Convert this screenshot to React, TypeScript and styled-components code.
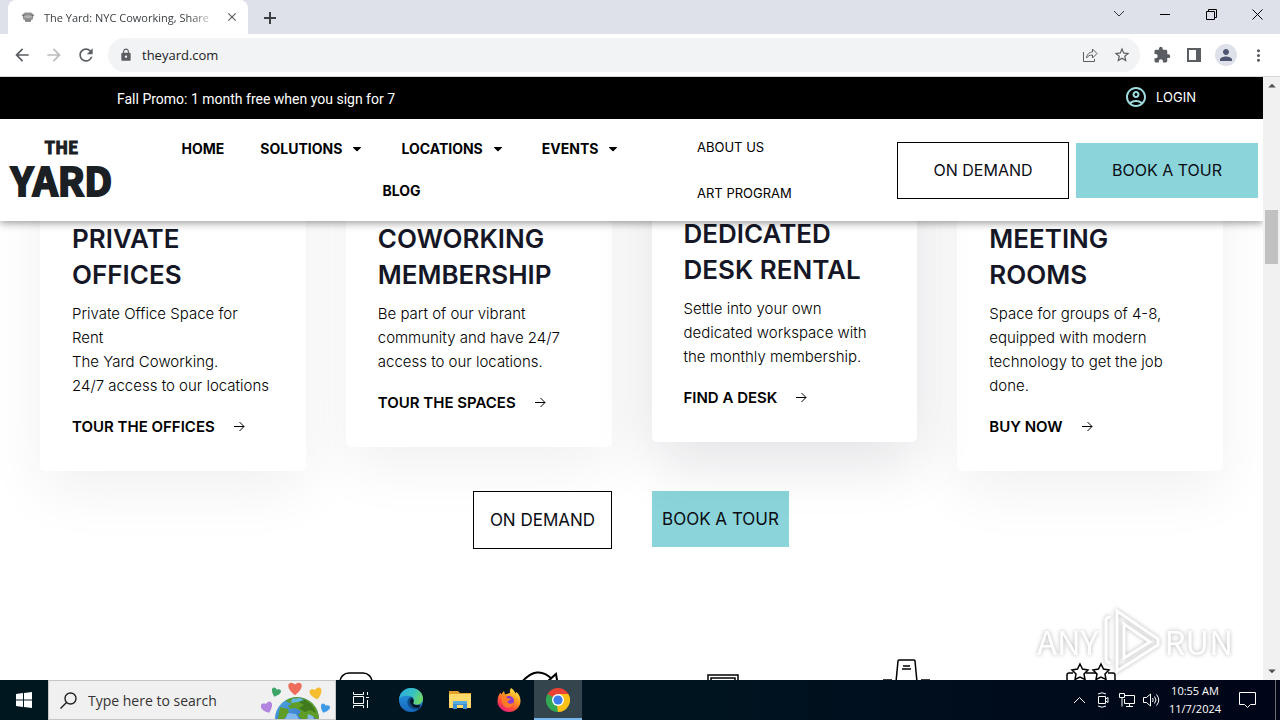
import React from "react";
import styled, { createGlobalStyle } from "styled-components";
import {
  MdArrowBack,
  MdArrowForward,
  MdRefresh,
  MdLock,
  MdStarBorder,
  MdExtension,
  MdMoreVert,
  MdPerson,
  MdClose,
  MdArrowDropUp,
  MdArrowDropDown,
  MdOutlineAccountCircle,
} from "react-icons/md";

const GlobalStyle = createGlobalStyle`
  * { box-sizing: border-box; }
  body { margin: 0; background: #fff; }
  button, input { font: inherit; color: inherit; border: 0; padding: 0; background: none; outline: 0; }
  a { color: inherit; text-decoration: none; }
  svg { display: block; flex: none; }
`;

const site = `Inter, "Liberation Sans", sans-serif`;
const system = `"Open Sans", "Noto Sans", sans-serif`;
const narrow = `"Noto Sans CJK SC", "Liberation Sans", sans-serif`;
const aqua = "#8ad4da";

const Desktop = styled.div`
  display: flex;
  flex-direction: column;
  height: 100vh;
  overflow: hidden;
  font-family: ${system};
  font-size: 12px;
`;

/* ---------- browser chrome ---------- */

const TabStrip = styled.div`
  display: flex;
  align-items: flex-end;
  height: 34px;
  flex: none;
  padding-left: 8px;
  background: #dee1e9;
`;

const Tab = styled.div`
  display: flex;
  align-items: center;
  width: 240px;
  height: 34px;
  padding: 0 9px 0 13px;
  gap: 9px;
  background: #fff;
  border-radius: 8px 8px 0 0;
  color: #3c4043;
`;

const TabTitle = styled.span`
  flex: 1;
  font-size: 11px;
  white-space: nowrap;
  mask-image: linear-gradient(90deg, #000 85%, transparent);
`;

const IconButton = styled.button<{ $w?: number; $color?: string }>`
  display: flex;
  align-items: center;
  justify-content: center;
  width: ${(p) => p.$w ?? 32}px;
  height: 32px;
  color: ${(p) => p.$color ?? "#5a5e63"};
`;

const TabClose = styled(IconButton)`
  width: 14px;
`;

const WindowButtons = styled.div`
  display: flex;
  align-items: center;
  align-self: flex-start;
  margin-left: auto;
  height: 28px;
`;

const Toolbar = styled.div`
  display: flex;
  align-items: center;
  height: 43px;
  flex: none;
  padding: 0 6px;
  background: #fff;
  border-bottom: 1px solid #d5d7da;
`;

const AddressBar = styled.label`
  display: flex;
  align-items: center;
  flex: 1;
  height: 34px;
  margin: 0 6px;
  padding: 0 2px 0 11px;
  border-radius: 17px;
  background: #f1f3f4;
  color: #5a5e63;
`;

const AddressInput = styled.input`
  flex: 1;
  min-width: 0;
  padding-left: 9px;
  font-size: 13px;
  color: #202124;
`;

const Avatar = styled.span`
  display: flex;
  align-items: center;
  justify-content: center;
  width: 22px;
  height: 22px;
  border-radius: 50%;
  background: #dee1e9;
  color: #4f5470;
`;

/* ---------- page ---------- */

const Viewport = styled.div`
  display: flex;
  flex: 1;
  min-height: 0;
`;

const Page = styled.div`
  position: relative;
  flex: 1;
  min-width: 0;
  overflow: hidden;
  background: #fff;
  font-family: ${site};
  color: #000;
`;

const Scrollbar = styled.div`
  display: flex;
  flex-direction: column;
  align-items: center;
  width: 17px;
  background: #f1f1f1;
  color: #505050;
`;

const Track = styled.div`
  flex: 1;
  width: 13px;
  padding-top: 115px;
`;

const Thumb = styled.div`
  height: 54px;
  background: #c1c1c1;
`;

const PromoBar = styled.div`
  position: relative;
  z-index: 2;
  display: flex;
  align-items: center;
  justify-content: space-between;
  height: 42px;
  padding: 0 67px 2px 117px;
  background: #000;
  color: #fff;
  font-size: 14px;
`;

const PromoText = styled.p`
  margin: 0;
  padding-top: 4px;
  font-family: Roboto, sans-serif;
`;

const Login = styled.a`
  display: flex;
  align-items: center;
  gap: 8px;
  font-size: 13px;
`;

const Header = styled.header`
  position: relative;
  z-index: 1;
  display: flex;
  align-items: center;
  height: 102px;
  padding: 0 5px 0 11px;
  background: #fff;
  box-shadow: 0 2px 8px rgba(0, 0, 0, 0.4);
`;

const Logo = styled.a`
  display: flex;
  flex-direction: column;
  align-items: center;
  width: 101px;
  font-family: ${narrow};
  font-weight: 700;
  color: #1a2023;
`;

const LogoTop = styled.span`
  font-size: 17px;
  line-height: 18px;
  -webkit-text-stroke: 1px #1a2023;
`;

const LogoMain = styled.span`
  font-size: 39px;
  line-height: 46px;
  -webkit-text-stroke: 2px #1a2023;
`;

const Nav = styled.nav`
  display: flex;
  flex: 1;
  flex-wrap: wrap;
  justify-content: center;
  padding: 0 56px 2px 50px;
`;

const NavLink = styled.a`
  display: flex;
  align-items: center;
  height: 42px;
  padding: 0 18px;
  gap: 7px;
  font-size: 14px;
  font-weight: 700;
`;

const SideNav = styled.nav`
  display: flex;
  flex-direction: column;
  width: 200px;
  font-size: 13px;
  line-height: 46px;
`;

const Cta = styled.button<{ $solid?: boolean; $compact?: boolean }>`
  height: ${(p) => (p.$compact ? 58 : 57) - (p.$solid ? 2 : 0)}px;
  min-width: ${(p) => (p.$compact ? (p.$solid ? 137 : 139) : p.$solid ? 182 : 172)}px;
  font-size: ${(p) => (p.$compact ? 17 : 16)}px;
  font-weight: 400;
  white-space: nowrap;
  background: ${(p) => (p.$solid ? aqua : "#fff")};
  border: ${(p) => (p.$solid ? "0" : "1px solid #000")};
  color: #0a0d14;
`;

const HeaderActions = styled.div`
  display: flex;
  align-items: center;
  gap: 7px;
`;

const CardGrid = styled.section`
  display: grid;
  grid-template-columns: repeat(4, 1fr);
  align-items: start;
  gap: 40px;
  margin-top: -120px;
  padding: 0 40px;
`;

const Card = styled.article<{ $raised?: boolean }>`
  padding: 120px 32px 31px;
  background: #fff;
  border-radius: 5px;
  box-shadow: 0 20px 60px ${(p) => (p.$raised ? "rgba(20, 20, 43, 0.12)" : "rgba(0, 0, 0, 0.06)")};
  transform: ${(p) => (p.$raised ? "translateY(-5px)" : "none")};
`;

const CardTitle = styled.h2`
  margin: 0 0 9px;
  font-size: 26px;
  line-height: 36px;
  font-weight: 600;
  color: #151726;
  white-space: pre-line;
`;

const CardText = styled.p`
  margin: 0 0 16px;
  font-size: 15px;
  line-height: 24px;
  font-weight: 300;
  white-space: pre-line;
`;

const CardLink = styled.a`
  display: flex;
  align-items: center;
  gap: 18px;
  font-size: 15px;
  line-height: 26px;
  font-weight: 600;
`;

const CtaRow = styled.div`
  display: flex;
  justify-content: center;
  align-items: flex-start;
  gap: 40px;
  padding: 20px 1px 0 0;
`;

const Features = styled.section`
  display: grid;
  grid-template-columns: repeat(6, 1fr);
  justify-items: center;
  align-items: start;
  padding: 107px 80px 0;
`;

const Watermark = styled.div`
  position: absolute;
  right: 30px;
  bottom: 6px;
  display: flex;
  align-items: center;
  gap: 3px;
  color: #fff;
  font-family: ${narrow};
  font-size: 33px;
  line-height: 40px;
  filter: drop-shadow(0 0 2px rgba(0, 0, 0, 0.3));
`;

/* ---------- taskbar ---------- */

const Taskbar = styled.div`
  display: flex;
  align-items: stretch;
  height: 40px;
  flex: none;
  background: linear-gradient(90deg, #00171f, #001420 55%, #000518);
  color: #fff;
`;

const TaskButton = styled.button<{ $active?: boolean; $w?: number }>`
  display: flex;
  align-items: center;
  justify-content: center;
  width: ${(p) => p.$w ?? 48}px;
  background: ${(p) => (p.$active ? "#34454e" : "none")};
  box-shadow: ${(p) => (p.$active ? "inset 0 -2px #76b9ed" : "none")};
`;

const TaskButtons = styled.div`
  display: flex;
  gap: 1px;
`;

const Search = styled.label`
  display: flex;
  align-items: center;
  width: 288px;
  padding: 0 4px 0 11px;
  gap: 11px;
  background: #f0f0f0;
  border: 1px solid #c4c7c9;
`;

const SearchInput = styled.input`
  flex: 1;
  min-width: 0;
  font-size: 14px;
  &::placeholder {
    color: #333;
    opacity: 1;
  }
`;

const Tray = styled.div`
  display: flex;
  align-items: center;
  margin-left: auto;
`;

const TrayButton = styled.button`
  display: flex;
  align-items: center;
  justify-content: center;
  width: 24px;
  height: 40px;
`;

const Clock = styled.div`
  width: 64px;
  font-size: 11px;
  line-height: 18px;
  text-align: center;
`;

const Notifications = styled(TrayButton)`
  width: 40px;
  margin-right: 8px;
`;

const PeekEdge = styled.div`
  width: 5px;
  height: 40px;
  border-left: 1px solid #6b7078;
`;

/* ---------- drawings ---------- */

const Line = ({
  w = 16,
  h = 16,
  sw = 1,
  box,
  children,
}: {
  w?: number;
  h?: number;
  sw?: number;
  box?: string;
  children: React.ReactNode;
}) => (
  <svg width={w} height={h} viewBox={box ?? `0 0 ${w} ${h}`} fill="none" stroke="currentColor" strokeWidth={sw} aria-hidden>
    {children}
  </svg>
);

const Caret = () => (
  <svg width="16" height="8" viewBox="0 0 16 8" aria-hidden>
    <path d="M4.500 3h7q1 0 .4.800L8.600 7q-.6.600-1.200 0L4.100 3.800Q3.500 3 4.500 3z" fill="#000" />
  </svg>
);

const Favicon = () => (
  <svg width="14" height="14" viewBox="0 0 14 14" aria-hidden>
    <path d="M1 5.500h12M4 11h6" stroke="#777" strokeWidth="1.500" />
    <path d="M2 4l2-1.500h6L12 4v5l-3 2H5L2 9z" fill="#777" opacity=".8" />
    <path d="M4 5.500v2M6 5v3M8 5v3M10 5.500v2" stroke="#eee" strokeWidth=".8" />
  </svg>
);

const Earth = () => (
  <svg width="70" height="38" viewBox="0 0 70 38" aria-hidden>
    <defs>
      <clipPath id="globe"><circle cx="36" cy="38" r="22" /></clipPath>
      <linearGradient id="sea" x1="0" y1="0" x2="1" y2="1">
        <stop offset="0" stopColor="#4faee0" /><stop offset="1" stopColor="#3465c4" />
      </linearGradient>
      <path id="heart" d="M0 5C-8-1-4-6 0-2.500C4-6 8-1 0 5z" />
    </defs>
    <g clipPath="url(#globe)">
      <rect x="12" y="14" width="50" height="28" fill="url(#sea)" />
      <path d="M24 20q6-5 14-4 12 1 18 12l3 12-9-5-7 5-6-5 3-5-6-3-5 1-2-3 4-2-4-2z" fill="#5f9d28" />
      <path d="M40 17q12 4 15 15l-6-3-5 2-6-4 5-3-5-3z" fill="#3f7a1e" />
      <path d="M31 18l8-1 4 2-6 2-7 1z" fill="#63b7e8" />
      <path d="M19 26l8 2 1 4-5 6h-6z" fill="#5f9d28" />
      <path d="M27 32l8 1 3 5H24zM47 33l5 2 2 5h-8z" fill="#7fb8ef" />
    </g>
    <use href="#heart" transform="translate(34 7) scale(1.450)" fill="#ee6d5a" />
    <use href="#heart" transform="translate(15 11) rotate(20) scale(1)" fill="#3aa567" />
    <use href="#heart" transform="translate(55 12) rotate(-15) scale(1.300)" fill="#f6bd2f" />
    <use href="#heart" transform="translate(6 26) rotate(-20) scale(1.250)" fill="#b184e0" />
    <use href="#heart" transform="translate(64 27) rotate(20) scale(1)" fill="#3d9ae8" />
  </svg>
);

const Edge = () => (
  <svg width="26" height="26" viewBox="0 0 26 26" aria-hidden>
    <defs>
      <linearGradient id="edgeTop" x1="0" y1="0" x2="1" y2=".4">
        <stop offset="0" stopColor="#2fa8e0" /><stop offset=".6" stopColor="#35c1c4" /><stop offset="1" stopColor="#6bd66b" />
      </linearGradient>
      <linearGradient id="edgeLow" x1="0" y1="0" x2="0" y2="1">
        <stop offset="0" stopColor="#2b9be0" /><stop offset="1" stopColor="#1668bd" />
      </linearGradient>
    </defs>
    <circle cx="13" cy="13" r="12" fill="url(#edgeLow)" />
    <path d="M1.200 12C2 5 7 1 13 1c7 0 12 5 12 10.500 0 4-3 6-6.500 6-2.500 0-4-.8-3.500-2 1.500-1.500 1-5.500-3-6.500C7 8 2.500 9 1.200 12z" fill="url(#edgeTop)" />
    <path d="M14 10c-3 0-5 2.500-4.500 6 .5 4 4 6.500 8 6.500 2 0 4-.5 5.500-2.500-3 1.500-7.500.5-8.500-2.500-.5-1.500 1-2.500 1-4.500 0-1.300-.5-2.500-1.500-3z" fill="#0d4a86" />
    <path d="M13.500 11.500q2.800.5 2 3.500-.8 1.500 1 2.700 3 .8 6-.2l-1 3q-4 1-6.500-.8-2.500-2.200-3-5.200.5-2.400 1.500-3z" fill="#00141f" />
  </svg>
);

const Folder = () => (
  <svg width="24" height="22" viewBox="0 0 24 22" aria-hidden>
    <path d="M1 2h9l2 2h11v4H1z" fill="#e0a02c" />
    <path d="M1 5h22v14H1z" fill="#ffd96a" />
    <path d="M5 12h14v8h-4v-4H9v4H5z" fill="#3c8fd0" />
    <path d="M5 12h14v3H5z" fill="#55aae0" />
  </svg>
);

const Firefox = () => (
  <svg width="26" height="26" viewBox="0 0 26 26" aria-hidden>
    <defs>
      <linearGradient id="fox" x1=".8" y1="0" x2=".2" y2="1">
        <stop offset="0" stopColor="#fff04a" /><stop offset=".4" stopColor="#ff9a20" /><stop offset=".7" stopColor="#ff4a3c" /><stop offset="1" stopColor="#e31587" />
      </linearGradient>
    </defs>
    <path d="M15 1c2.500 1.500 4 4 4.500 5.500l1-1.500c3 2.500 4 6 4 9 0 6-5 11-11.500 11S1.500 20 1.500 14c0-3.500 1.300-6.500 3-8.500l.5 2L8 4l1 3.500c2-1 4.500-1 5-1.500C13.500 4 14 2.500 15 1z" fill="url(#fox)" />
    <circle cx="13" cy="14" r="5" fill="#8a3bd0" />
    <path d="M6 10c2.500-1.500 5 0 6 1.500h3c-.5 2-3.500 2-3.500 3.500 1.500 2.500 4 2 6 .5-.5 3.500-3 5-5.500 5-4 0-7-4-6-10.500z" fill="#ff7d26" />
  </svg>
);

const Chrome = () => (
  <svg width="24" height="24" viewBox="0 0 24 24" aria-hidden>
    <path d="M12 12L1.600 6A12 12 0 0 1 22.400 6z" fill="#ea4335" />
    <path d="M12 12L22.400 6A12 12 0 0 1 12 24z" fill="#fbc116" />
    <path d="M12 12v12A12 12 0 0 1 1.600 6z" fill="#33a853" />
    <path d="M12 6h10.400L17.200 15z" fill="#fbc116" />
    <path d="M1.600 6L6.800 15 12 12 12 6z" fill="#33a853" />
    <path d="M1.600 6h20.800H12L6.800 9z" fill="#ea4335" />
    <path d="M17.200 15L12 24l-1-6z" fill="#fbc116" />
    <circle cx="12" cy="12" r="6" fill="#fff" />
    <circle cx="12" cy="12" r="4.600" fill="#3b7ded" />
  </svg>
);

const AnyRunMark = () => (
  <svg width="60" height="66" viewBox="0 0 60 66" fill="none" stroke="#fff" strokeWidth="3" aria-hidden>
    <path d="M16 3L57 31v6L16 63V3zM23 16v34l26-16zM5 50V12q0-3 5-3M5 50q0 5 5 5" />
  </svg>
);

const Arrow = () => (
  <Line w={12} h={12}>
    <path d="M1 5.500h10M6.500 1l4.500 4.500L6.500 10" />
  </Line>
);

/* ---------- content ---------- */

const cards = [
  { title: "PRIVATE\nOFFICES", text: "Private Office Space for\nRent\nThe Yard Coworking.\n24/7 access to our locations", link: "TOUR THE OFFICES" },
  { title: "COWORKING\nMEMBERSHIP", text: "Be part of our vibrant\ncommunity and have 24/7\naccess to our locations.", link: "TOUR THE SPACES" },
  { title: "DEDICATED\nDESK RENTAL", text: "Settle into your own\ndedicated workspace with\nthe monthly membership.", link: "FIND A DESK", raised: true },
  { title: "MEETING\nROOMS", text: "Space for groups of 4-8,\nequipped with modern\ntechnology to get the job\ndone.", link: "BUY NOW" },
];

const navItems = [
  { label: "HOME" },
  { label: "SOLUTIONS", menu: true },
  { label: "LOCATIONS", menu: true },
  { label: "EVENTS", menu: true },
  { label: "BLOG" },
];

const BrowserChrome = () => (
  <>
    <TabStrip>
      <Tab>
        <Favicon />
        <TabTitle>The Yard: NYC Coworking, Share</TabTitle>
        <TabClose aria-label="Close tab"><MdClose size={14} /></TabClose>
      </Tab>
      <IconButton $w={44} $color="#3c4043" aria-label="New tab">
        <Line w={12} h={12} sw={2}><path d="M0 6h12M6 0v12" /></Line>
      </IconButton>
      <WindowButtons>
        <IconButton $w={46} $color="#333" aria-label="Search tabs"><Line w={12} h={8}><path d="M1 1l5 5 5-5" /></Line></IconButton>
        <IconButton $w={46} $color="#000" aria-label="Minimize"><Line w={10} h={10}><path d="M0 5.500h10" /></Line></IconButton>
        <IconButton $w={46} $color="#000" aria-label="Restore"><Line w={11} h={11}><path d="M.5 2.500h8v8h-8zM2.500 2.500v-2h8v8h-2" /></Line></IconButton>
        <IconButton $w={46} $color="#000" aria-label="Close"><Line w={11} h={11}><path d="M.5.500l10 10M10.500.500l-10 10" /></Line></IconButton>
      </WindowButtons>
    </TabStrip>
    <Toolbar>
      <IconButton aria-label="Back"><MdArrowBack size={20} /></IconButton>
      <IconButton $color="#babcbe" aria-label="Forward"><MdArrowForward size={20} /></IconButton>
      <IconButton aria-label="Reload"><MdRefresh size={20} /></IconButton>
      <AddressBar>
        <MdLock size={14} />
        <AddressInput aria-label="Address" defaultValue="theyard.com" />
        <IconButton aria-label="Share">
          <Line w={16} h={16}><path d="M1.500 5v9.500h11V12M4.500 11c.5-4 3-6 6-6V2l4.500 4.500L10.500 11V8c-3 0-4.500 1-6 3z" /></Line>
        </IconButton>
        <IconButton aria-label="Bookmark"><MdStarBorder size={18} /></IconButton>
      </AddressBar>
      <IconButton aria-label="Extensions"><MdExtension size={18} /></IconButton>
      <IconButton aria-label="Side panel">
        <svg width="14" height="14" viewBox="0 0 14 14" aria-hidden><path d="M0 0h14v14H0zM2 2v10h7V2z" fill="currentColor" fillRule="evenodd" /></svg>
      </IconButton>
      <IconButton aria-label="Profile"><Avatar><MdPerson size={18} /></Avatar></IconButton>
      <IconButton aria-label="Menu"><MdMoreVert size={19} /></IconButton>
    </Toolbar>
  </>
);

const SiteHeader = () => (
  <>
    <PromoBar>
      <PromoText>Fall Promo: 1 month free when you sign for 7</PromoText>
      <Login href="#login"><MdOutlineAccountCircle size={24} color="#9fdce0" />LOGIN</Login>
    </PromoBar>
    <Header>
      <Logo href="#home">
        <LogoTop>THE</LogoTop>
        <LogoMain>YARD</LogoMain>
      </Logo>
      <Nav>
        {navItems.map((item) => (
          <NavLink key={item.label} href="#nav">
            {item.label}
            {item.menu && <Caret />}
          </NavLink>
        ))}
      </Nav>
      <SideNav>
        <a href="#about">ABOUT US</a>
        <a href="#art">ART PROGRAM</a>
      </SideNav>
      <HeaderActions>
        <Cta>ON DEMAND</Cta>
        <Cta $solid>BOOK A TOUR</Cta>
      </HeaderActions>
    </Header>
  </>
);

const FeatureIcons = () => (
  <Features>
    <span />
    <Line w={34} h={60} sw={1.5} box="0 -16 34 60"><rect x="1" y="1" width="32" height="48" rx="9" /></Line>
    <Line w={42} h={60} sw={2} box="0 -16 42 60"><path d="M2 11Q18-8 33 7M29 9l8-7 2 12M20 8v4" /></Line>
    <Line w={34} h={60} sw={1.5} box="0 -17 34 60"><path d="M2 40V2h30v38M5 40V5h24v35" /></Line>
    <Line w={50} h={60} sw={1.5} box="0 -2 50 60"><path d="M14 24l2-21q0-1 1-1h15q1 0 1 1l2 21M21 8h7M20 11h9M1 22h9M39 22h9" /></Line>
    <Line w={50} h={60} sw={1.5} box="0 -7 50 60">
      <path d="M1 30V12q0-2 2-2h4M20 10h10M42 10h5q2 0 2 2v18" />
      <path d="M14 1l2.500 5 5.500 1-4 4 1 5.500-5-2.500-5 2.500 1-5.500-4-4 5.500-1zM35 1l2.500 5 5.500 1-4 4 1 5.500-5-2.500-5 2.500 1-5.500-4-4 5.500-1z" />
    </Line>
  </Features>
);

const WindowsTaskbar = () => (
  <Taskbar>
    <TaskButton aria-label="Start">
      <svg width="16" height="16" viewBox="0 0 16 16" aria-hidden><path d="M0 2l7-1v6.500H0zM8 1l8-1v7.500H8zM0 8.500h7V15l-7-1zM8 8.500h8V16l-8-1z" fill="#fff" /></svg>
    </TaskButton>
    <Search>
      <Line w={17} h={17}><g stroke="#222" strokeWidth="1.400"><circle cx="10.500" cy="6.500" r="5.500" /><path d="M6.500 10.500L.5 16.500" /></g></Line>
      <SearchInput aria-label="Search" placeholder="Type here to search" />
      <Earth />
    </Search>
    <TaskButtons>
      <TaskButton $w={50} aria-label="Task view">
        <Line w={18} h={16}><path d="M1.500 0v2.500h10V0M1.500 4.500h10v7h-10zM1.500 16v-2.500h10V16M15.500 0v3M15.500 8v8M14 5.500h3" /></Line>
      </TaskButton>
      <TaskButton aria-label="Edge"><Edge /></TaskButton>
      <TaskButton aria-label="Files"><Folder /></TaskButton>
      <TaskButton aria-label="Firefox"><Firefox /></TaskButton>
      <TaskButton $active aria-label="Chrome"><Chrome /></TaskButton>
    </TaskButtons>
    <Tray>
      <TrayButton aria-label="Hidden icons"><Line w={13} h={8}><path d="M1 7l5.500-5.500L12 7" /></Line></TrayButton>
      <TrayButton aria-label="Meet now"><Line w={14} h={16}><path d="M2.500 4.500h7v7h-7zM9.500 7l2.500-1.500v5L9.500 9M2 2q4-2.500 8 0M2 14q4 2.500 8 0" /></Line></TrayButton>
      <TrayButton aria-label="Network"><Line w={17} h={14}><path d="M6 2.500h9.500v8H5.500V6M10.500 10.500v3M7 13.500h7M.5.500h5v4h-5zM3 4.500v9" /></Line></TrayButton>
      <TrayButton aria-label="Volume"><Line w={17} h={14}><path d="M.5 4.500h3l4-3.500v12l-4-3.500h-3zM9.500 5q1.500 2 0 4M11.500 3.500q3 3.500 0 7M13.500 1.500q4.500 5.500 0 11" /></Line></TrayButton>
      <Clock>10:55 AM<br />11/7/2024</Clock>
      <Notifications aria-label="Notifications"><Line w={17} h={16}><path d="M.5.500h16v12h-5l-3 3-3-3h-5z" /></Line></Notifications>
      <PeekEdge />
    </Tray>
  </Taskbar>
);

export default function App() {
  return (
    <Desktop>
      <GlobalStyle />
      <BrowserChrome />
      <Viewport>
        <Page>
          <SiteHeader />
          <CardGrid>
            {cards.map((card) => (
              <Card key={card.title} $raised={card.raised}>
                <CardTitle>{card.title}</CardTitle>
                <CardText>{card.text}</CardText>
                <CardLink href="#card">{card.link}<Arrow /></CardLink>
              </Card>
            ))}
          </CardGrid>
          <CtaRow>
            <Cta $compact>ON DEMAND</Cta>
            <Cta $compact $solid>BOOK A TOUR</Cta>
          </CtaRow>
          <FeatureIcons />
          <Watermark><span>ANY</span><AnyRunMark /><span>RUN</span></Watermark>
        </Page>
        <Scrollbar>
          <MdArrowDropUp size={18} />
          <Track><Thumb /></Track>
          <MdArrowDropDown size={18} />
        </Scrollbar>
      </Viewport>
      <WindowsTaskbar />
    </Desktop>
  );
}
